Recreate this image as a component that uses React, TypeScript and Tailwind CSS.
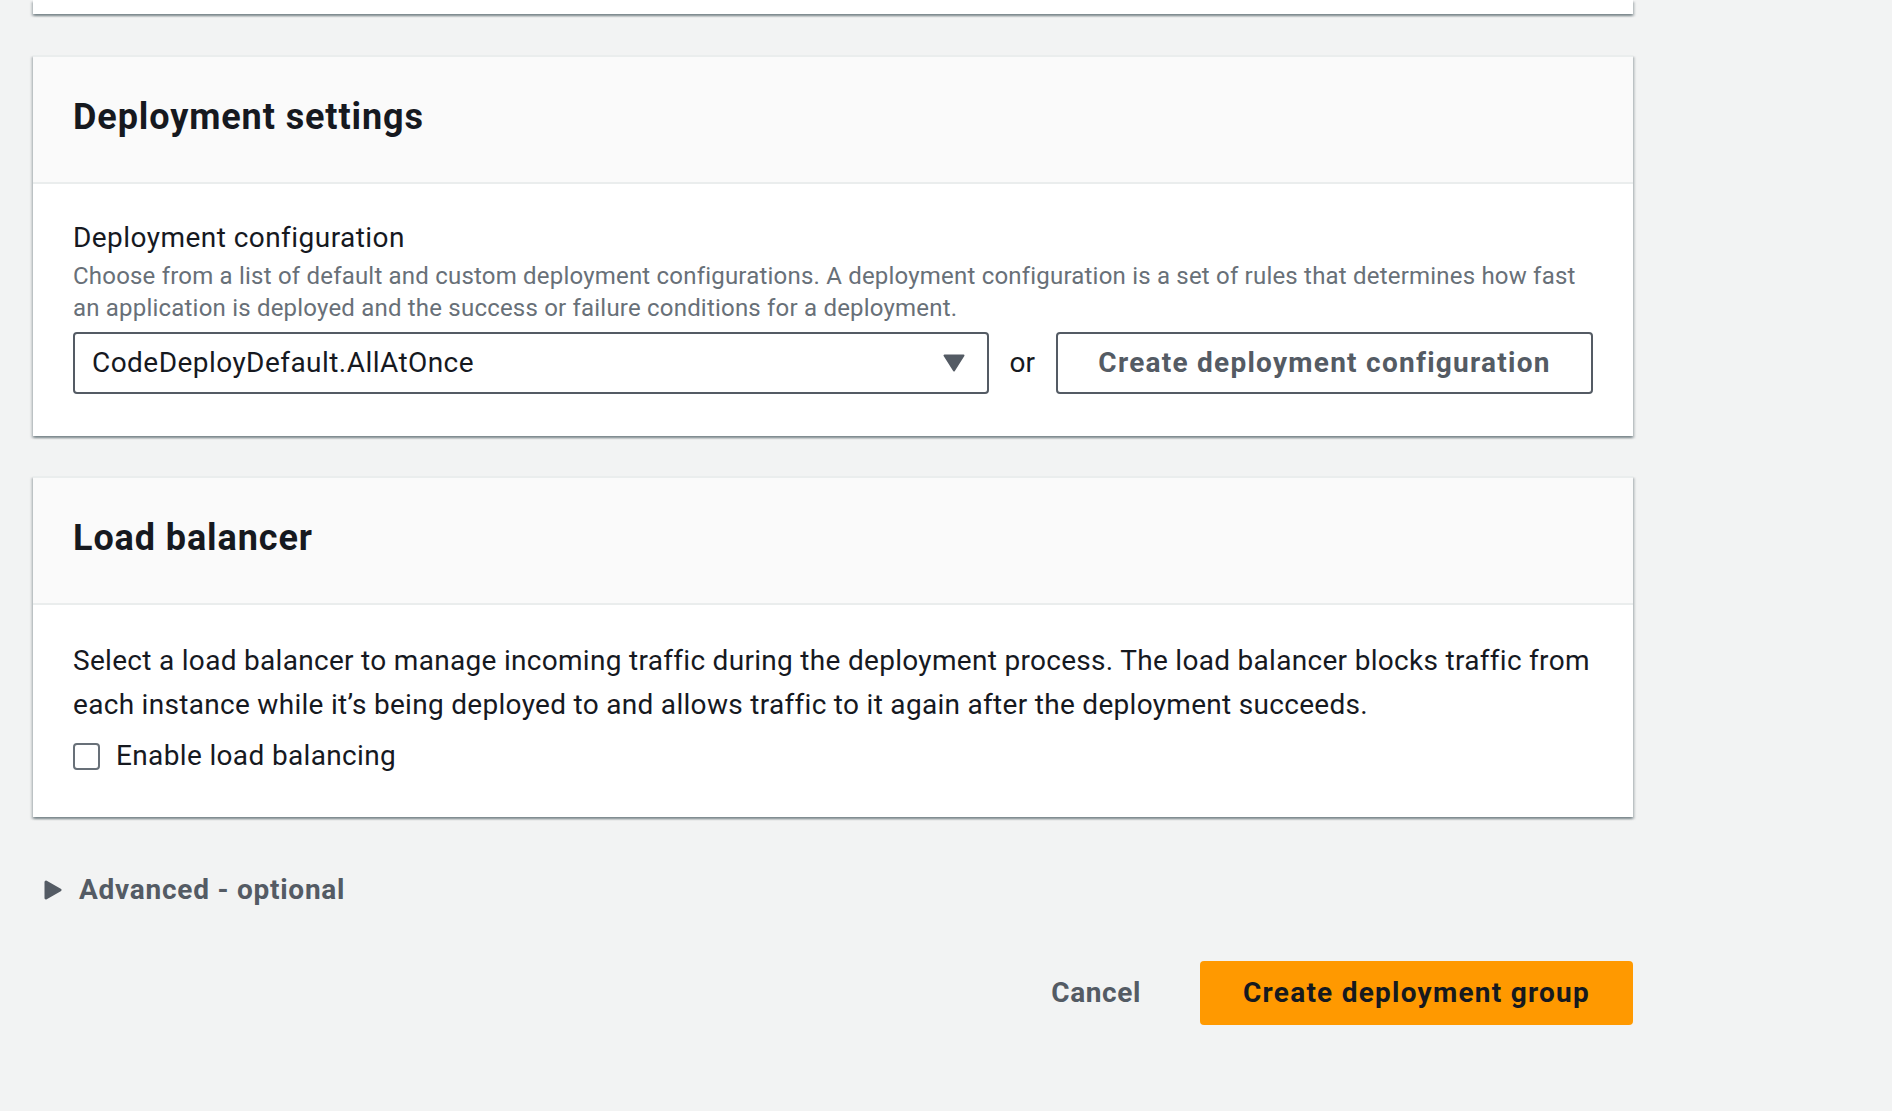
import React from "react";

const font = { fontFamily: "Roboto, 'Liberation Sans', sans-serif" };

const cardShadow =
  "shadow-[0_2px_2px_0_rgba(0,28,36,0.3),2px_2px_2px_0_rgba(0,28,36,0.15),-2px_2px_2px_0_rgba(0,28,36,0.15)]";

function Card({ title, children, pb }: { title: string; children: React.ReactNode; pb: string }) {
  return (
    <section className={`bg-white border-t-2 border-[#eaeded] ${cardShadow}`}>
      <header className="bg-[#fafafa] border-b-2 border-[#eaeded] px-[40px] pt-[38px] pb-[43px]">
        <h2 className="text-[36px] leading-[44px] font-bold text-[#16191f] tracking-[0.9px]">{title}</h2>
      </header>
      <div className={`px-[40px] ${pb}`}>{children}</div>
    </section>
  );
}

function Caret() {
  return (
    <svg width="22" height="18" viewBox="0 0 22 18" className="shrink-0">
      <path d="M1.5 1.5h19L11 16.5z" fill="#545b64" stroke="#545b64" strokeWidth="2" strokeLinejoin="round" />
    </svg>
  );
}

export default function App() {
  return (
    <div className="min-h-screen w-full bg-[#f2f3f3] antialiased" style={font}>
      <div className="ml-[33px] w-[1600px] flex flex-col">
        {/* tail of the card above */}
        <div className={`h-[14px] bg-white ${cardShadow}`} />

        <div className="mt-[41px]">
          <Card title="Deployment settings" pb="pt-[34px] pb-[42px]">
            <div className="text-[28px] leading-[40px] text-[#16191f] tracking-[0.45px]">Deployment configuration</div>
            <p className="mt-[2px] text-[24px] leading-[32px] text-[#687078] tracking-[0.2px] pr-[6px]">
              Choose from a list of default and custom deployment configurations. A deployment configuration is a set of rules that determines how fast an application is deployed and the success or failure conditions for a deployment.
            </p>
            <div className="mt-[8px] flex items-center">
              <div className="flex-1 h-[62px] border-2 border-[#545b64] rounded-[4px] flex items-center justify-between pl-[17px] pr-[22px]">
                <span className="text-[28px] text-[#16191f] tracking-[0.45px]">CodeDeployDefault.AllAtOnce</span>
                <Caret />
              </div>
              <span className="mx-[21px] text-[28px] text-[#16191f]">or</span>
              <button className="h-[62px] w-[537px] border-2 border-[#545b64] rounded-[4px] bg-white text-[28px] font-bold text-[#545b64] tracking-[1.25px]">
                Create deployment configuration
              </button>
            </div>
          </Card>
        </div>

        <div className="mt-[40px]">
          <Card title="Load balancer" pb="pt-[34px] pb-[39px]">
            <p className="text-[28px] leading-[44px] text-[#16191f] tracking-[0.3px]">
              Select a load balancer to manage incoming traffic during the deployment process. The load balancer blocks traffic from each instance while it’s being deployed to and allows traffic to it again after the deployment succeeds.
            </p>
            <label className="mt-[7px] flex items-center gap-[16px] h-[44px]">
              <span className="w-[27px] h-[27px] border-2 border-[#687078] rounded-[4px] bg-white shrink-0" />
              <span className="text-[28px] text-[#16191f] tracking-[0.35px]">Enable load balancing</span>
            </label>
          </Card>
        </div>

        <div className="mt-[51px] flex items-center h-[44px] pl-[11px]">
          <svg width="18" height="20" viewBox="0 0 18 20" className="shrink-0">
            <path d="M2 2L16 10L2 18z" fill="#545b64" stroke="#545b64" strokeWidth="3" strokeLinejoin="round" />
          </svg>
          <span className="ml-[17px] text-[28px] font-bold text-[#545b64] tracking-[0.75px]">Advanced - optional</span>
        </div>

        <div className="mt-[49px] flex justify-end items-center gap-[19px]">
          <button className="h-[64px] px-[40px] text-[28px] font-bold text-[#545b64] tracking-[0.6px]">Cancel</button>
          <button className="h-[64px] w-[433px] rounded-[4px] bg-[#ff9900] text-[28px] font-bold text-[#16191f] tracking-[1.25px]">
            Create deployment group
          </button>
        </div>
      </div>
    </div>
  );
}
